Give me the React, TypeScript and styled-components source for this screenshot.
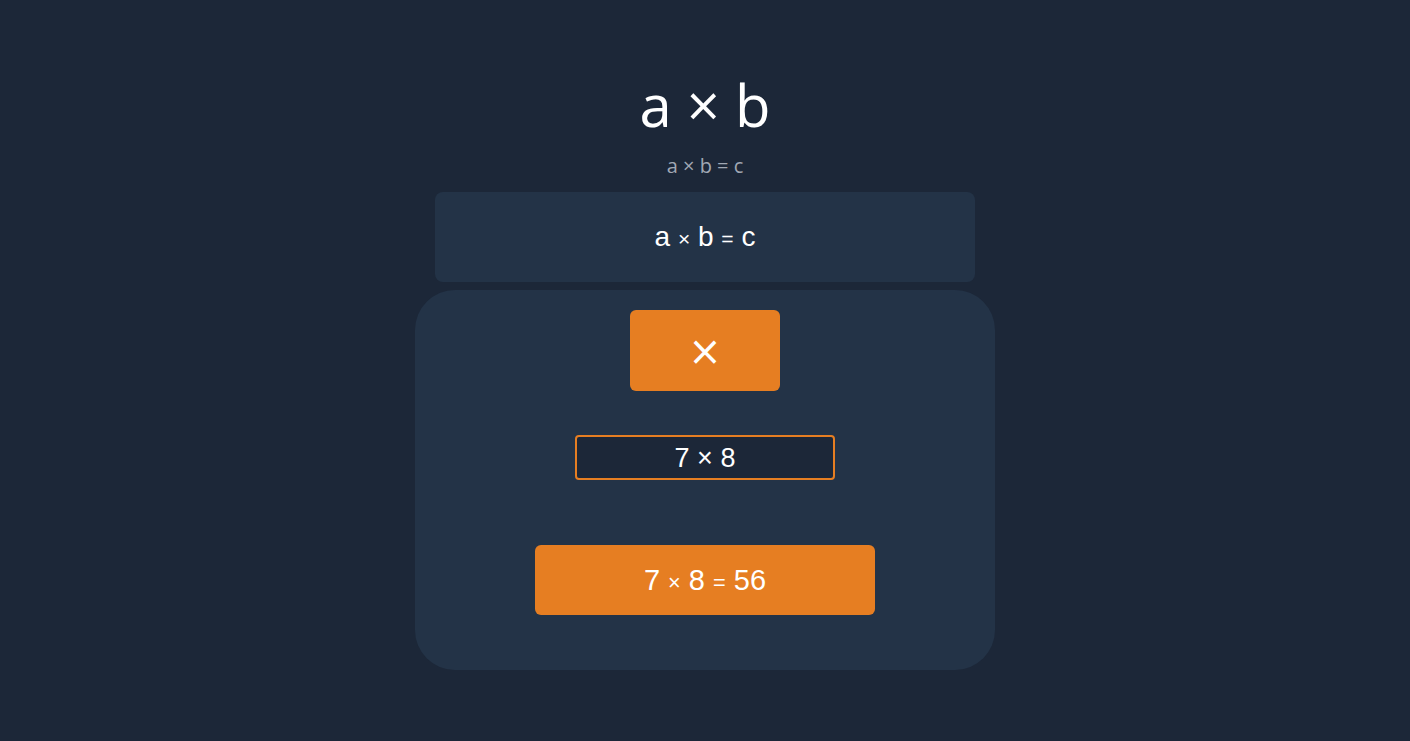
import { useState } from 'react';
import styled, { createGlobalStyle } from 'styled-components';

const GlobalStyle = createGlobalStyle`
  html, body {
    margin: 0;
    padding: 0;
    background: #1c2738;
  }
`;

const Page = styled.div`
  min-height: 741px;
  display: flex;
  flex-direction: column;
  align-items: center;
  padding-top: 70px;
  box-sizing: border-box;
  font-family: 'Liberation Sans', Arial, sans-serif;
  color: #ffffff;
`;

const Title = styled.h1`
  margin: 0;
  font-family: 'Open Sans', sans-serif;
  font-weight: 400;
  font-size: 58px;
  line-height: 70px;
`;

const Subtitle = styled.div`
  margin-top: 14px;
  font-family: 'Open Sans', sans-serif;
  font-size: 20px;
  line-height: 24px;
  color: #a0a8b4;
`;

const FormulaCard = styled.div`
  margin-top: 14px;
  width: 540px;
  height: 90px;
  border-radius: 8px;
  background: #233347;
  display: flex;
  align-items: center;
  justify-content: center;
  font-size: 28px;
`;

const Panel = styled.div`
  margin-top: 8px;
  width: 580px;
  height: 380px;
  box-sizing: border-box;
  border-radius: 40px;
  background: #233347;
  display: flex;
  flex-direction: column;
  align-items: center;
  padding-top: 20px;
`;

const OpButton = styled.button`
  width: 150px;
  height: 81px;
  border: none;
  border-radius: 6px;
  background: #e67e22;
  color: #ffffff;
  font-family: 'DejaVu Sans', sans-serif;
  font-size: 40px;
  display: flex;
  align-items: center;
  justify-content: center;
  cursor: pointer;
`;

const ExprInput = styled.input`
  margin-top: 44px;
  width: 260px;
  height: 45px;
  box-sizing: border-box;
  border: 2px solid #e67e22;
  border-radius: 4px;
  background: #1c2738;
  color: #ffffff;
  text-align: center;
  font-family: 'Liberation Sans', Arial, sans-serif;
  font-size: 27px;
  padding-top: 3px;
  outline: none;
`;

const ResultButton = styled.button`
  margin-top: 65px;
  width: 340px;
  height: 70px;
  border: none;
  border-radius: 6px;
  background: #e67e22;
  color: #ffffff;
  font-family: 'Liberation Sans', Arial, sans-serif;
  font-size: 29px;
  cursor: pointer;
`;

const Small = styled.span`
  font-size: 0.75em;
`;

const App = () => {
  const [expr, setExpr] = useState('7 × 8');

  return (
    <>
      <GlobalStyle />
      <Page>
        <Title>a × b</Title>
        <Subtitle>a × b = c</Subtitle>
        <FormulaCard>
          <span>
            a <Small>×</Small> b <Small>=</Small> c
          </span>
        </FormulaCard>
        <Panel>
          <OpButton>×</OpButton>
          <ExprInput value={expr} onChange={(e) => setExpr(e.target.value)} />
          <ResultButton>
            7 <Small>×</Small> 8 <Small>=</Small> 56
          </ResultButton>
        </Panel>
      </Page>
    </>
  );
};

export default App;
